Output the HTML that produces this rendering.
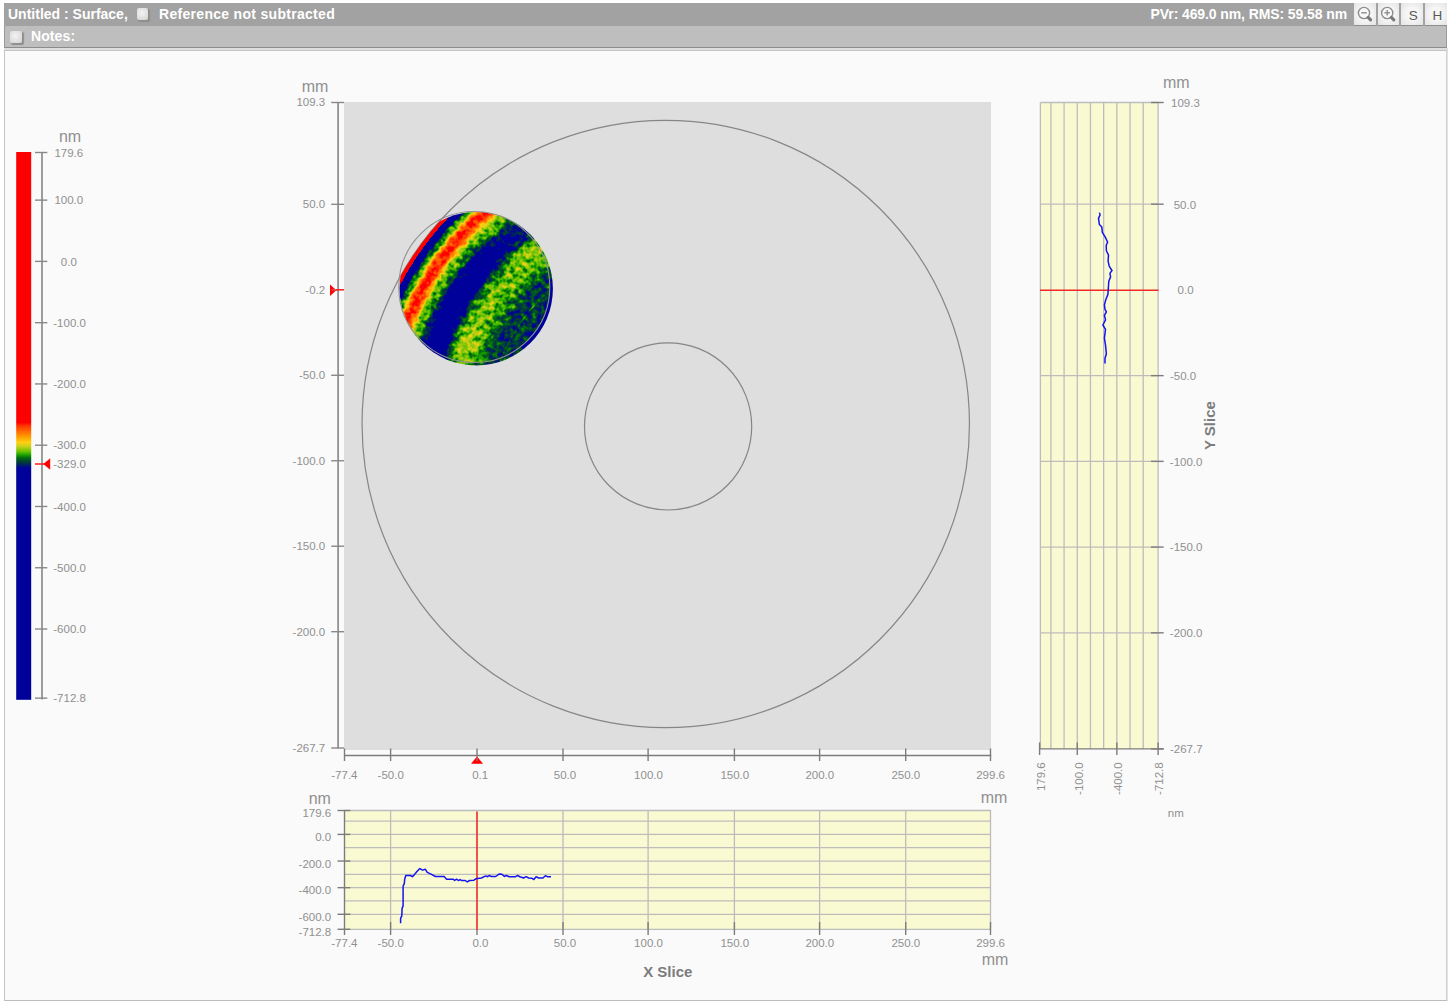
<!DOCTYPE html>
<html><head><meta charset="utf-8"><title>Surface</title>
<style>
html,body{margin:0;padding:0;background:#fff;}
body{width:1448px;height:1001px;overflow:hidden;position:relative;font-family:"Liberation Sans",sans-serif;}
#titlebar{position:absolute;left:4px;top:3px;width:1443px;height:23px;background:#a2a2a2;}
#notesbar{position:absolute;left:4px;top:26px;width:1443px;height:22px;background:#bebebe;border-bottom:1px solid #8c8c8c;border-left:1px solid #9a9a9a;border-right:1px solid #9a9a9a;box-sizing:border-box;}
#gap{position:absolute;left:4px;top:48px;width:1444px;height:2px;background:#dedede;}
#rstrip{position:absolute;left:1447px;top:50px;width:1px;height:951px;background:#e2e2e2;}
#panel{position:absolute;left:4px;top:50px;width:1443px;height:951px;background:#fafafa;border:1px solid #c4c4c4;border-right-color:#d2d2d2;border-bottom-color:#bcbcbc;box-sizing:border-box;}
.hb{position:absolute;color:#fff;font-weight:bold;font-size:14px;line-height:16px;white-space:nowrap;}
.cb{position:absolute;width:11.5px;height:12px;background:radial-gradient(circle at 45% 40%,#f0f0f0 10%,#d2d2d2 100%);border-radius:2px;box-shadow:1.5px 1.5px 1px #8e8e8e;}
.btn{position:absolute;top:3px;width:21.5px;height:23px;background:radial-gradient(ellipse at center,#f6f6f6 40%,#e2e2e2 100%);border-bottom:1.5px solid #8e8e8e;box-sizing:border-box;color:#585858;font-size:13.5px;line-height:26px;text-align:center;}
svg{position:absolute;left:0;top:0;}
svg text{font-family:"Liberation Sans",sans-serif;}
</style></head><body>
<div id="titlebar"></div><div id="notesbar"></div><div id="gap"></div><div id="panel"></div><div id="rstrip"></div>
<div class="hb" style="left:8px;top:6px;">Untitled : Surface,</div>
<div class="cb" style="left:136.5px;top:8.3px;"></div>
<div class="hb" style="left:159px;top:6px;letter-spacing:0.3px;">Reference not subtracted</div>
<div class="cb" style="left:10px;top:30.6px;"></div>
<div class="hb" style="left:31px;top:28px;letter-spacing:0.1px;">Notes:</div>
<div class="hb" style="right:101px;top:5.7px;letter-spacing:-0.1px;">PVr: 469.0 nm, RMS: 59.58 nm</div>
<div class="btn" style="left:1354px;"><svg style="left:0;top:0" width="22" height="23" viewBox="0 0 22 23"><circle cx="10" cy="10" r="5.6" fill="#f8f8f8" stroke="#8c8c8c" stroke-width="1.4"/><line x1="14.2" y1="14.4" x2="16.6" y2="16.8" stroke="#7a7a7a" stroke-width="3.2" stroke-linecap="round"/><line x1="7.2" y1="9.8" x2="12.8" y2="9.8" stroke="#8c8c8c" stroke-width="1.4"/></svg></div>
<div class="btn" style="left:1377.5px;"><svg style="left:0;top:0" width="22" height="23" viewBox="0 0 22 23"><circle cx="9.2" cy="10" r="5.6" fill="#f8f8f8" stroke="#8c8c8c" stroke-width="1.4"/><line x1="13.4" y1="14.4" x2="15.8" y2="16.8" stroke="#7a7a7a" stroke-width="3.2" stroke-linecap="round"/><line x1="6.4" y1="9.8" x2="12" y2="9.8" stroke="#8c8c8c" stroke-width="1.4"/><line x1="9.2" y1="7" x2="9.2" y2="12.6" stroke="#8c8c8c" stroke-width="1.4"/></svg></div>
<div class="btn" style="left:1401px;"><span style="position:relative;left:1.5px">S</span></div><div class="btn" style="left:1425px;"><span style="position:relative;left:1.5px">H</span></div>
<svg width="1448" height="1001" viewBox="0 0 1448 1001">

<defs>
<linearGradient id="cbar" x1="0" y1="0" x2="0" y2="1">
<stop offset="0.00000" stop-color="#ff0000"/>
<stop offset="0.49398" stop-color="#ff0000"/>
<stop offset="0.50018" stop-color="#ff3800"/>
<stop offset="0.51114" stop-color="#ff7000"/>
<stop offset="0.52026" stop-color="#ffa000"/>
<stop offset="0.53030" stop-color="#ffd010"/>
<stop offset="0.53760" stop-color="#c8d018"/>
<stop offset="0.54765" stop-color="#60c000"/>
<stop offset="0.55312" stop-color="#18a000"/>
<stop offset="0.55860" stop-color="#006810"/>
<stop offset="0.56827" stop-color="#003048"/>
<stop offset="0.57704" stop-color="#00009a"/>
<stop offset="1.00000" stop-color="#00009a"/>
</linearGradient>
<clipPath id="diskclip"><circle cx="476.2" cy="288.8" r="76.7"/></clipPath>
<clipPath id="bigclip"><circle cx="665.75" cy="424" r="303.7"/></clipPath>
<radialGradient id="bands" gradientUnits="userSpaceOnUse" cx="665.75" cy="424" r="310">
<stop offset="0.4839" stop-color="#434343"/>
<stop offset="0.5258" stop-color="#454545"/>
<stop offset="0.5355" stop-color="#484848"/>
<stop offset="0.5668" stop-color="#484848"/>
<stop offset="0.5710" stop-color="#5a5a5a"/>
<stop offset="0.5752" stop-color="#484848"/>
<stop offset="0.6065" stop-color="#484848"/>
<stop offset="0.6194" stop-color="#525252"/>
<stop offset="0.6355" stop-color="#5c5c5c"/>
<stop offset="0.6548" stop-color="#646464"/>
<stop offset="0.6742" stop-color="#6a6a6a"/>
<stop offset="0.6903" stop-color="#707070"/>
<stop offset="0.7048" stop-color="#6a6a6a"/>
<stop offset="0.7194" stop-color="#626262"/>
<stop offset="0.7306" stop-color="#545454"/>
<stop offset="0.7403" stop-color="#434343"/>
<stop offset="0.7468" stop-color="#333333"/>
<stop offset="0.7677" stop-color="#1d1d1d"/>
<stop offset="0.7935" stop-color="#1d1d1d"/>
<stop offset="0.8129" stop-color="#2d2d2d"/>
<stop offset="0.8210" stop-color="#373737"/>
<stop offset="0.8274" stop-color="#474747"/>
<stop offset="0.8355" stop-color="#565656"/>
<stop offset="0.8452" stop-color="#606060"/>
<stop offset="0.8581" stop-color="#6a6a6a"/>
<stop offset="0.8655" stop-color="#767676"/>
<stop offset="0.8697" stop-color="#878787"/>
<stop offset="0.8758" stop-color="#9d9d9d"/>
<stop offset="0.8839" stop-color="#b8b8b8"/>
<stop offset="0.8968" stop-color="#cacaca"/>
<stop offset="0.9097" stop-color="#b8b8b8"/>
<stop offset="0.9171" stop-color="#9d9d9d"/>
<stop offset="0.9219" stop-color="#858585"/>
<stop offset="0.9252" stop-color="#767676"/>
<stop offset="0.9290" stop-color="#686868"/>
<stop offset="0.9355" stop-color="#5c5c5c"/>
<stop offset="0.9403" stop-color="#505050"/>
<stop offset="0.9435" stop-color="#434343"/>
<stop offset="0.9468" stop-color="#2d2d2d"/>
<stop offset="0.9532" stop-color="#000000"/>
<stop offset="0.9671" stop-color="#000000"/>
<stop offset="0.9671" stop-color="#ffffff"/>
<stop offset="1.0000" stop-color="#ffffff"/>
</radialGradient>
<radialGradient id="blob1" gradientUnits="userSpaceOnUse" cx="512" cy="232" r="42"><stop offset="0" stop-color="#fff" stop-opacity="0.15"/><stop offset="1" stop-color="#fff" stop-opacity="0"/></radialGradient>
<radialGradient id="blob2" gradientUnits="userSpaceOnUse" cx="470" cy="340" r="24"><stop offset="0" stop-color="#fff" stop-opacity="0.09"/><stop offset="1" stop-color="#fff" stop-opacity="0"/></radialGradient>
<filter id="cmapf" x="0" y="0" width="1" height="1" color-interpolation-filters="sRGB">
<feTurbulence type="fractalNoise" baseFrequency="0.19" numOctaves="2" seed="11" result="t"/>
<feColorMatrix in="t" type="matrix" values="1 0 0 0 0  1 0 0 0 0  1 0 0 0 0  0 0 0 0 1" result="n"/>
<feComposite in="SourceGraphic" in2="n" operator="arithmetic" k1="0" k2="1" k3="0.33" k4="-0.165" result="v"/>
<feComponentTransfer in="v">
<feFuncR type="table" tableValues="0.000 0.000 0.000 0.000 0.000 0.000 0.000 0.000 0.000 0.000 0.000 0.000 0.000 0.000 0.000 0.000 0.000 0.000 0.006 0.054 0.117 0.261 0.399 0.512 0.626 0.739 0.834 0.917 1.000 1.000 1.000 1.000 1.000 1.000 1.000 1.000 1.000 1.000 1.000 1.000 1.000 1.000 1.000 1.000 1.000 1.000 1.000 1.000 1.000 1.000 1.000 1.000 1.000"/>
<feFuncG type="table" tableValues="0.000 0.000 0.000 0.000 0.000 0.000 0.000 0.000 0.000 0.000 0.000 0.000 0.045 0.105 0.164 0.226 0.289 0.352 0.421 0.533 0.638 0.702 0.756 0.774 0.791 0.809 0.816 0.816 0.816 0.763 0.711 0.659 0.604 0.547 0.490 0.433 0.377 0.322 0.266 0.204 0.104 0.004 0.000 0.000 0.000 0.000 0.000 0.000 0.000 0.000 0.000 0.000 0.000"/>
<feFuncB type="table" tableValues="0.604 0.604 0.604 0.604 0.604 0.604 0.604 0.604 0.604 0.604 0.604 0.604 0.527 0.425 0.323 0.244 0.181 0.118 0.059 0.027 0.000 0.000 0.005 0.031 0.058 0.084 0.087 0.075 0.063 0.045 0.028 0.010 0.000 0.000 0.000 0.000 0.000 0.000 0.000 0.000 0.000 0.000 0.000 0.000 0.000 0.000 0.000 0.000 0.000 0.000 0.000 0.000 0.000"/>
<feFuncA type="linear" slope="0" intercept="1"/>
</feComponentTransfer>
</filter>
</defs>

<rect x="16.2" y="152" width="15" height="547.8" fill="url(#cbar)"/>
<line x1="42" y1="152" x2="42" y2="699.5" stroke="#8c8c8c" stroke-width="1.7" />
<line x1="35" y1="152.5" x2="47.3" y2="152.5" stroke="#888888" stroke-width="1.4" />
<text x="68.8" y="156.7" font-size="11.5" text-anchor="middle" fill="#909090" font-weight="normal" >179.6</text>
<line x1="35" y1="200.12999999999997" x2="47.3" y2="200.12999999999997" stroke="#888888" stroke-width="1.4" />
<text x="68.8" y="204.32999999999996" font-size="11.5" text-anchor="middle" fill="#909090" font-weight="normal" >100.0</text>
<line x1="35" y1="261.4" x2="47.3" y2="261.4" stroke="#888888" stroke-width="1.4" />
<text x="68.8" y="265.59999999999997" font-size="11.5" text-anchor="middle" fill="#909090" font-weight="normal" >0.0</text>
<line x1="35" y1="322.66999999999996" x2="47.3" y2="322.66999999999996" stroke="#888888" stroke-width="1.4" />
<text x="69.6" y="326.86999999999995" font-size="11.5" text-anchor="middle" fill="#909090" font-weight="normal" >-100.0</text>
<line x1="35" y1="383.94" x2="47.3" y2="383.94" stroke="#888888" stroke-width="1.4" />
<text x="69.6" y="388.14" font-size="11.5" text-anchor="middle" fill="#909090" font-weight="normal" >-200.0</text>
<line x1="35" y1="445.21" x2="47.3" y2="445.21" stroke="#888888" stroke-width="1.4" />
<text x="69.6" y="449.40999999999997" font-size="11.5" text-anchor="middle" fill="#909090" font-weight="normal" >-300.0</text>
<line x1="35" y1="506.48" x2="47.3" y2="506.48" stroke="#888888" stroke-width="1.4" />
<text x="69.6" y="510.68" font-size="11.5" text-anchor="middle" fill="#909090" font-weight="normal" >-400.0</text>
<line x1="35" y1="567.75" x2="47.3" y2="567.75" stroke="#888888" stroke-width="1.4" />
<text x="69.6" y="571.95" font-size="11.5" text-anchor="middle" fill="#909090" font-weight="normal" >-500.0</text>
<line x1="35" y1="629.02" x2="47.3" y2="629.02" stroke="#888888" stroke-width="1.4" />
<text x="69.6" y="633.22" font-size="11.5" text-anchor="middle" fill="#909090" font-weight="normal" >-600.0</text>
<line x1="35" y1="698.13256" x2="47.3" y2="698.13256" stroke="#888888" stroke-width="1.4" />
<text x="69.6" y="702.3325600000001" font-size="11.5" text-anchor="middle" fill="#909090" font-weight="normal" >-712.8</text>
<text x="70" y="142.3" font-size="16" text-anchor="middle" fill="#909090" font-weight="normal" >nm</text>
<line x1="35" y1="464" x2="47" y2="464" stroke="#ff1a1a" stroke-width="1.5" />
<path d="M43.3 464 L50.2 458.2 L50.2 469.8 Z" fill="#ff0000"/>
<text x="69.6" y="468.2" font-size="11.5" text-anchor="middle" fill="#909090" font-weight="normal" >-329.0</text>
<rect x="344" y="102" width="647" height="648" fill="#dedede"/>
<circle cx="665.75" cy="424" r="303.7" fill="none" stroke="#868686" stroke-width="1.2"/>
<circle cx="668.1" cy="426.4" r="83.6" fill="none" stroke="#868686" stroke-width="1.2"/>
<g clip-path="url(#diskclip)"><g clip-path="url(#bigclip)"><g filter="url(#cmapf)"><rect x="390" y="202" width="172" height="172" fill="url(#bands)"/><path d="M552.8 283 A76.7 76.7 0 0 1 523.4 349.2" fill="none" stroke="#000" stroke-width="6.5"/><rect x="390" y="202" width="172" height="172" fill="url(#blob1)"/><rect x="390" y="202" width="172" height="172" fill="url(#blob2)"/></g></g></g>
<circle cx="474.3" cy="287" r="75.5" fill="none" stroke="#909090" stroke-width="1.1"/>
<line x1="338.1" y1="102" x2="338.1" y2="748.6" stroke="#8c8c8c" stroke-width="1.7" />
<line x1="331.2" y1="102.5" x2="344" y2="102.5" stroke="#888888" stroke-width="1.4" />
<text x="325.2" y="106.4" font-size="11.5" text-anchor="end" fill="#909090" font-weight="normal" >109.3</text>
<line x1="331.2" y1="204.32500000000002" x2="344" y2="204.32500000000002" stroke="#888888" stroke-width="1.4" />
<text x="325.2" y="208.22500000000002" font-size="11.5" text-anchor="end" fill="#909090" font-weight="normal" >50.0</text>
<line x1="331.2" y1="375.275" x2="344" y2="375.275" stroke="#888888" stroke-width="1.4" />
<text x="325.2" y="379.17499999999995" font-size="11.5" text-anchor="end" fill="#909090" font-weight="normal" >-50.0</text>
<line x1="331.2" y1="460.75" x2="344" y2="460.75" stroke="#888888" stroke-width="1.4" />
<text x="325.2" y="464.65" font-size="11.5" text-anchor="end" fill="#909090" font-weight="normal" >-100.0</text>
<line x1="331.2" y1="546.225" x2="344" y2="546.225" stroke="#888888" stroke-width="1.4" />
<text x="325.2" y="550.125" font-size="11.5" text-anchor="end" fill="#909090" font-weight="normal" >-150.0</text>
<line x1="331.2" y1="631.7" x2="344" y2="631.7" stroke="#888888" stroke-width="1.4" />
<text x="325.2" y="635.6" font-size="11.5" text-anchor="end" fill="#909090" font-weight="normal" >-200.0</text>
<line x1="331.2" y1="748" x2="344" y2="748" stroke="#888888" stroke-width="1.4" />
<text x="325.2" y="751.9" font-size="11.5" text-anchor="end" fill="#909090" font-weight="normal" >-267.7</text>
<text x="325.2" y="294.3" font-size="11.5" text-anchor="end" fill="#909090" font-weight="normal" >-0.2</text>
<path d="M336.4 290.3 L330 284.6 L330 296 Z" fill="#ff0000"/>
<line x1="331.5" y1="290" x2="337" y2="290" stroke="#c86060" stroke-width="1.2" />
<line x1="336" y1="289.8" x2="344" y2="289.8" stroke="#ff1a1a" stroke-width="1.5" />
<text x="315" y="92" font-size="16" text-anchor="middle" fill="#909090" font-weight="normal" >mm</text>
<line x1="344" y1="755.5" x2="991.2" y2="755.5" stroke="#7c7c7c" stroke-width="1.4" />
<line x1="344.5" y1="748.5" x2="344.5" y2="761" stroke="#7c7c7c" stroke-width="1.4" />
<text x="344.4" y="778.5" font-size="11.5" text-anchor="middle" fill="#909090" font-weight="normal" >-77.4</text>
<line x1="390.6" y1="748.5" x2="390.6" y2="761" stroke="#7c7c7c" stroke-width="1.4" />
<text x="390.7" y="778.5" font-size="11.5" text-anchor="middle" fill="#909090" font-weight="normal" >-50.0</text>
<line x1="563" y1="748.5" x2="563" y2="761" stroke="#7c7c7c" stroke-width="1.4" />
<text x="565" y="778.5" font-size="11.5" text-anchor="middle" fill="#909090" font-weight="normal" >50.0</text>
<line x1="648.1" y1="748.5" x2="648.1" y2="761" stroke="#7c7c7c" stroke-width="1.4" />
<text x="648.5" y="778.5" font-size="11.5" text-anchor="middle" fill="#909090" font-weight="normal" >100.0</text>
<line x1="734.4" y1="748.5" x2="734.4" y2="761" stroke="#7c7c7c" stroke-width="1.4" />
<text x="734.8" y="778.5" font-size="11.5" text-anchor="middle" fill="#909090" font-weight="normal" >150.0</text>
<line x1="819.6" y1="748.5" x2="819.6" y2="761" stroke="#7c7c7c" stroke-width="1.4" />
<text x="819.8" y="778.5" font-size="11.5" text-anchor="middle" fill="#909090" font-weight="normal" >200.0</text>
<line x1="905.7" y1="748.5" x2="905.7" y2="761" stroke="#7c7c7c" stroke-width="1.4" />
<text x="905.8" y="778.5" font-size="11.5" text-anchor="middle" fill="#909090" font-weight="normal" >250.0</text>
<line x1="990.5" y1="748.5" x2="990.5" y2="761" stroke="#7c7c7c" stroke-width="1.4" />
<text x="990.6" y="778.5" font-size="11.5" text-anchor="middle" fill="#909090" font-weight="normal" >299.6</text>
<text x="480.2" y="778.5" font-size="11.5" text-anchor="middle" fill="#909090" font-weight="normal" >0.1</text>
<path d="M477 756.4 L471 763.8 L483 763.8 Z" fill="#ff0000"/>
<line x1="477" y1="748.5" x2="477" y2="756" stroke="#7c7c7c" stroke-width="1.4" />
<line x1="477" y1="756" x2="477" y2="761" stroke="#c06060" stroke-width="1.4" />
<rect x="344.5" y="810.5" width="646.3" height="118.79999999999995" fill="#fafad2"/>
<line x1="344.5" y1="810.5" x2="991" y2="810.5" stroke="#bcbcbc" stroke-width="1.3" />
<line x1="344.5" y1="821.0966831017481" x2="991" y2="821.0966831017481" stroke="#bcbcbc" stroke-width="1.3" />
<line x1="344.5" y1="834.4090990587181" x2="991" y2="834.4090990587181" stroke="#bcbcbc" stroke-width="1.3" />
<line x1="344.5" y1="847.721515015688" x2="991" y2="847.721515015688" stroke="#bcbcbc" stroke-width="1.3" />
<line x1="344.5" y1="861.033930972658" x2="991" y2="861.033930972658" stroke="#bcbcbc" stroke-width="1.3" />
<line x1="344.5" y1="874.346346929628" x2="991" y2="874.346346929628" stroke="#bcbcbc" stroke-width="1.3" />
<line x1="344.5" y1="887.658762886598" x2="991" y2="887.658762886598" stroke="#bcbcbc" stroke-width="1.3" />
<line x1="344.5" y1="900.9711788435678" x2="991" y2="900.9711788435678" stroke="#bcbcbc" stroke-width="1.3" />
<line x1="344.5" y1="914.2835948005378" x2="991" y2="914.2835948005378" stroke="#bcbcbc" stroke-width="1.3" />
<line x1="344.5" y1="929.3" x2="991" y2="929.3" stroke="#bcbcbc" stroke-width="1.3" />
<line x1="390.6" y1="810.5" x2="390.6" y2="929.3" stroke="#bcbcbc" stroke-width="1.3" />
<line x1="563" y1="810.5" x2="563" y2="929.3" stroke="#bcbcbc" stroke-width="1.3" />
<line x1="648.1" y1="810.5" x2="648.1" y2="929.3" stroke="#bcbcbc" stroke-width="1.3" />
<line x1="734.4" y1="810.5" x2="734.4" y2="929.3" stroke="#bcbcbc" stroke-width="1.3" />
<line x1="819.6" y1="810.5" x2="819.6" y2="929.3" stroke="#bcbcbc" stroke-width="1.3" />
<line x1="905.7" y1="810.5" x2="905.7" y2="929.3" stroke="#bcbcbc" stroke-width="1.3" />
<line x1="990.5" y1="810.5" x2="990.5" y2="929.3" stroke="#bcbcbc" stroke-width="1.3" />
<line x1="344.5" y1="810.5" x2="344.5" y2="935" stroke="#7c7c7c" stroke-width="1.4" />
<line x1="337.5" y1="810.5" x2="350.3" y2="810.5" stroke="#7c7c7c" stroke-width="1.4" />
<text x="331.2" y="817.2" font-size="11.5" text-anchor="end" fill="#909090" font-weight="normal" >179.6</text>
<line x1="337.5" y1="834.4090990587181" x2="350.3" y2="834.4090990587181" stroke="#7c7c7c" stroke-width="1.4" />
<text x="331.2" y="841.1090990587181" font-size="11.5" text-anchor="end" fill="#909090" font-weight="normal" >0.0</text>
<line x1="337.5" y1="861.033930972658" x2="350.3" y2="861.033930972658" stroke="#7c7c7c" stroke-width="1.4" />
<text x="331.2" y="867.7339309726581" font-size="11.5" text-anchor="end" fill="#909090" font-weight="normal" >-200.0</text>
<line x1="337.5" y1="887.658762886598" x2="350.3" y2="887.658762886598" stroke="#7c7c7c" stroke-width="1.4" />
<text x="331.2" y="894.358762886598" font-size="11.5" text-anchor="end" fill="#909090" font-weight="normal" >-400.0</text>
<line x1="337.5" y1="914.2835948005378" x2="350.3" y2="914.2835948005378" stroke="#7c7c7c" stroke-width="1.4" />
<text x="331.2" y="920.9835948005378" font-size="11.5" text-anchor="end" fill="#909090" font-weight="normal" >-600.0</text>
<line x1="337.5" y1="929.3" x2="350.3" y2="929.3" stroke="#7c7c7c" stroke-width="1.4" />
<text x="331.2" y="936.0" font-size="11.5" text-anchor="end" fill="#909090" font-weight="normal" >-712.8</text>
<text x="344.4" y="947.1" font-size="11.5" text-anchor="middle" fill="#909090" font-weight="normal" >-77.4</text>
<line x1="390.6" y1="922" x2="390.6" y2="935" stroke="#7c7c7c" stroke-width="1.4" />
<text x="390.7" y="947.1" font-size="11.5" text-anchor="middle" fill="#909090" font-weight="normal" >-50.0</text>
<line x1="563" y1="922" x2="563" y2="935" stroke="#7c7c7c" stroke-width="1.4" />
<text x="565" y="947.1" font-size="11.5" text-anchor="middle" fill="#909090" font-weight="normal" >50.0</text>
<line x1="648.1" y1="922" x2="648.1" y2="935" stroke="#7c7c7c" stroke-width="1.4" />
<text x="648.5" y="947.1" font-size="11.5" text-anchor="middle" fill="#909090" font-weight="normal" >100.0</text>
<line x1="734.4" y1="922" x2="734.4" y2="935" stroke="#7c7c7c" stroke-width="1.4" />
<text x="734.8" y="947.1" font-size="11.5" text-anchor="middle" fill="#909090" font-weight="normal" >150.0</text>
<line x1="819.6" y1="922" x2="819.6" y2="935" stroke="#7c7c7c" stroke-width="1.4" />
<text x="819.8" y="947.1" font-size="11.5" text-anchor="middle" fill="#909090" font-weight="normal" >200.0</text>
<line x1="905.7" y1="922" x2="905.7" y2="935" stroke="#7c7c7c" stroke-width="1.4" />
<text x="905.8" y="947.1" font-size="11.5" text-anchor="middle" fill="#909090" font-weight="normal" >250.0</text>
<line x1="990.5" y1="922" x2="990.5" y2="935" stroke="#7c7c7c" stroke-width="1.4" />
<text x="990.6" y="947.1" font-size="11.5" text-anchor="middle" fill="#909090" font-weight="normal" >299.6</text>
<line x1="477" y1="929.3" x2="477" y2="935" stroke="#7c7c7c" stroke-width="1.4" />
<text x="480.4" y="947.1" font-size="11.5" text-anchor="middle" fill="#909090" font-weight="normal" >0.0</text>
<line x1="477" y1="811.5" x2="477" y2="929.8" stroke="#f02828" stroke-width="1.6" />
<text x="319.8" y="803.8" font-size="16" text-anchor="middle" fill="#909090" font-weight="normal" >nm</text>
<text x="994" y="802.6" font-size="16" text-anchor="middle" fill="#909090" font-weight="normal" >mm</text>
<text x="995" y="964.7" font-size="16" text-anchor="middle" fill="#909090" font-weight="normal" >mm</text>
<text x="667.8" y="977.3" font-size="15" text-anchor="middle" fill="#7c7c7c" font-weight="bold" >X Slice</text>
<polyline fill="none" stroke="#1414f0" stroke-width="1.5" stroke-linejoin="round" points="400.6,923.3 400.6,918.4 401.8,915.9 402.1,908.4 403.1,905.9 403.1,886.1 404.3,883.6 404.7,879.2 405.8,875.5 410.5,875.5 412.4,876.7 414.2,874.9 416.7,871.8 419.8,868.6 422.6,870.1 425.4,869.3 427.3,872.4 431,874.2 435.4,876.5 444.1,876.5 446.6,879.2 453.4,879.2 454.6,880.5 456.5,879.2 458.4,880.5 460.2,879.6 461.5,880.5 465.2,880.5 467.3,881.9 469.6,880.5 473.9,880.2 475.8,878.8 481.4,878 485.7,875.9 487.6,876.7 489.2,875.5 491.3,876.5 495.7,876.5 499.4,873.9 501.9,874.2 504.4,876.4 506.2,875.5 509.3,876.7 515.6,876.7 517.4,875.5 519.9,876.7 523.6,878 526.1,876.7 528.6,878 531.7,878.2 533.8,879.5 536.1,876.7 538.6,878 542.9,878 545.4,875.7 547.3,876.7 551,876.7"/>
<rect x="1040.4" y="102.5" width="117.69999999999982" height="646.5" fill="#fafad2"/>
<line x1="1040.4" y1="102.5" x2="1040.4" y2="749" stroke="#bcbcbc" stroke-width="1.3" />
<line x1="1050.898565665621" y1="102.5" x2="1050.898565665621" y2="749" stroke="#bcbcbc" stroke-width="1.3" />
<line x1="1064.0877185118782" y1="102.5" x2="1064.0877185118782" y2="749" stroke="#bcbcbc" stroke-width="1.3" />
<line x1="1077.2768713581354" y1="102.5" x2="1077.2768713581354" y2="749" stroke="#bcbcbc" stroke-width="1.3" />
<line x1="1090.4660242043926" y1="102.5" x2="1090.4660242043926" y2="749" stroke="#bcbcbc" stroke-width="1.3" />
<line x1="1103.6551770506499" y1="102.5" x2="1103.6551770506499" y2="749" stroke="#bcbcbc" stroke-width="1.3" />
<line x1="1116.8443298969073" y1="102.5" x2="1116.8443298969073" y2="749" stroke="#bcbcbc" stroke-width="1.3" />
<line x1="1130.0334827431645" y1="102.5" x2="1130.0334827431645" y2="749" stroke="#bcbcbc" stroke-width="1.3" />
<line x1="1143.2226355894218" y1="102.5" x2="1143.2226355894218" y2="749" stroke="#bcbcbc" stroke-width="1.3" />
<line x1="1158.1" y1="102.5" x2="1158.1" y2="749" stroke="#bcbcbc" stroke-width="1.3" />
<line x1="1040.4" y1="102.5" x2="1158.1" y2="102.5" stroke="#bcbcbc" stroke-width="1.3" />
<line x1="1040.4" y1="204.17577999999997" x2="1158.1" y2="204.17577999999997" stroke="#bcbcbc" stroke-width="1.3" />
<line x1="1040.4" y1="375.63578" x2="1158.1" y2="375.63578" stroke="#bcbcbc" stroke-width="1.3" />
<line x1="1040.4" y1="461.36578" x2="1158.1" y2="461.36578" stroke="#bcbcbc" stroke-width="1.3" />
<line x1="1040.4" y1="547.09578" x2="1158.1" y2="547.09578" stroke="#bcbcbc" stroke-width="1.3" />
<line x1="1040.4" y1="632.82578" x2="1158.1" y2="632.82578" stroke="#bcbcbc" stroke-width="1.3" />
<line x1="1151" y1="102.5" x2="1163.7" y2="102.5" stroke="#7c7c7c" stroke-width="1.4" />
<text x="1171.0" y="106.9" font-size="11.5" text-anchor="start" fill="#909090" font-weight="normal" >109.3</text>
<line x1="1151" y1="204.17577999999997" x2="1163.7" y2="204.17577999999997" stroke="#7c7c7c" stroke-width="1.4" />
<text x="1173.7" y="208.57577999999998" font-size="11.5" text-anchor="start" fill="#909090" font-weight="normal" >50.0</text>
<text x="1177.6000000000001" y="294.30577999999997" font-size="11.5" text-anchor="start" fill="#909090" font-weight="normal" >0.0</text>
<line x1="1151" y1="375.63578" x2="1163.7" y2="375.63578" stroke="#7c7c7c" stroke-width="1.4" />
<text x="1170.0" y="380.03578" font-size="11.5" text-anchor="start" fill="#909090" font-weight="normal" >-50.0</text>
<line x1="1151" y1="461.36578" x2="1163.7" y2="461.36578" stroke="#7c7c7c" stroke-width="1.4" />
<text x="1169.8000000000002" y="465.76577999999995" font-size="11.5" text-anchor="start" fill="#909090" font-weight="normal" >-100.0</text>
<line x1="1151" y1="547.09578" x2="1163.7" y2="547.09578" stroke="#7c7c7c" stroke-width="1.4" />
<text x="1169.8000000000002" y="551.49578" font-size="11.5" text-anchor="start" fill="#909090" font-weight="normal" >-150.0</text>
<line x1="1151" y1="632.82578" x2="1163.7" y2="632.82578" stroke="#7c7c7c" stroke-width="1.4" />
<text x="1169.8000000000002" y="637.22578" font-size="11.5" text-anchor="start" fill="#909090" font-weight="normal" >-200.0</text>
<line x1="1151" y1="748.9042" x2="1163.7" y2="748.9042" stroke="#7c7c7c" stroke-width="1.4" />
<text x="1170.0" y="753.3041999999999" font-size="11.5" text-anchor="start" fill="#909090" font-weight="normal" >-267.7</text>
<line x1="1039.3" y1="748.9" x2="1163.7" y2="748.9" stroke="#7c7c7c" stroke-width="1.4" />
<line x1="1039.6" y1="742.4" x2="1039.6" y2="755" stroke="#7c7c7c" stroke-width="1.4" />
<text transform="translate(1044.8,762.3) rotate(-90)" font-size="11.5" text-anchor="end" fill="#909090">179.6</text>
<line x1="1077.2768713581354" y1="742.4" x2="1077.2768713581354" y2="755" stroke="#7c7c7c" stroke-width="1.4" />
<text transform="translate(1082.5,762.3) rotate(-90)" font-size="11.5" text-anchor="end" fill="#909090">-100.0</text>
<line x1="1116.8443298969073" y1="742.4" x2="1116.8443298969073" y2="755" stroke="#7c7c7c" stroke-width="1.4" />
<text transform="translate(1122.0,762.3) rotate(-90)" font-size="11.5" text-anchor="end" fill="#909090">-400.0</text>
<line x1="1158.1" y1="742.4" x2="1158.1" y2="755" stroke="#7c7c7c" stroke-width="1.4" />
<text transform="translate(1163.3,762.3) rotate(-90)" font-size="11.5" text-anchor="end" fill="#909090">-712.8</text>
<line x1="1040" y1="290.3" x2="1158.5" y2="290.3" stroke="#f02828" stroke-width="1.6" />
<text x="1176.3" y="88.4" font-size="16" text-anchor="middle" fill="#909090" font-weight="normal" >mm</text>
<text x="1175.8" y="817.3" font-size="11.5" text-anchor="middle" fill="#909090" font-weight="normal" >nm</text>
<text transform="translate(1214.8,425.6) rotate(-90)" font-size="15" font-weight="bold" text-anchor="middle" fill="#7c7c7c">Y Slice</text>
<polyline fill="none" stroke="#1414f0" stroke-width="1.5" stroke-linejoin="round" points="1099.4,212.6 1100.1,214.9 1098.5,218.4 1099.4,224.5 1101.8,227.1 1102.3,232.3 1105,236.7 1107.6,242 1106.2,245.5 1106.4,250.7 1108.5,255.1 1108.1,261.2 1109.3,266.4 1112,270.5 1109.9,273.4 1110.6,276.9 1108.8,281.3 1108.5,285.7 1107.9,294.4 1105.8,299.7 1104.4,304.9 1105,309.3 1106.4,311.9 1104.4,315.4 1105.5,319.8 1102.9,325 1105.5,329.4 1104.4,338.1 1105.5,345.1 1106.4,353.8 1105,358.2 1105,363.5"/>
</svg>
</body></html>
